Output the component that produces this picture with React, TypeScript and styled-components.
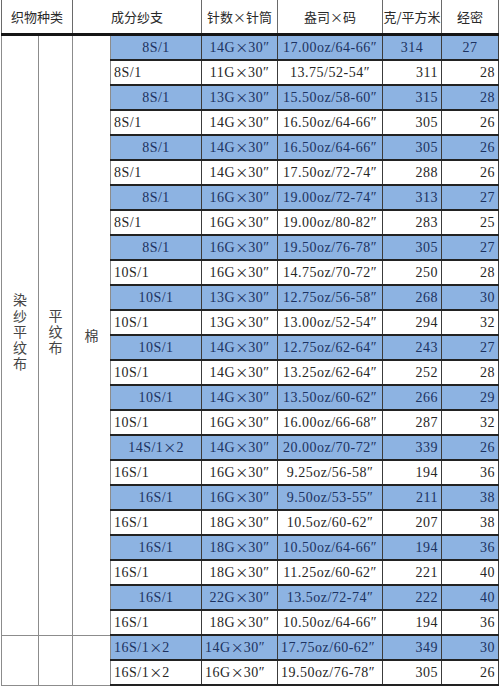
import React from 'react';
import styled, { createGlobalStyle } from 'styled-components';

const Global = createGlobalStyle`
  html, body { margin: 0; padding: 0; background: #ffffff; }
  body { font-family: "Liberation Serif", "Noto Sans CJK SC", serif; }
`;

const Page = styled.div`
  width: 500px;
  height: 686px;
  overflow: hidden;
  padding-left: 1px;
  box-sizing: border-box;
  background: #fff;
`;

const Table = styled.table`
  border-collapse: collapse;
  table-layout: fixed;
  width: 498px;
`;

const Col = styled.col<{ $w: number }>`
  width: ${(p) => p.$w}px;
`;

const HeadCell = styled.th`
  height: 33px;
  padding: 0;
  font-family: "Noto Sans CJK SC", sans-serif;
  font-size: 13px;
  font-weight: 400;
  color: #2a2a2a;
  text-align: center;
  vertical-align: middle;
  white-space: nowrap;
  overflow: visible;
  border-left: 1px solid #6a6a6a;
  border-right: 1px solid #6a6a6a;
  border-bottom: 3px solid #151515;
`;

const SideCell = styled.td`
  padding: 0;
  background: #ffffff;
  text-align: center;
  vertical-align: middle;
  border-left: 1px solid #8c8c8c;
  border-right: 1px solid #8c8c8c;
  border-bottom: 1px solid #8c8c8c;
`;

const VerticalText = styled.span`
  display: inline-block;
  writing-mode: vertical-rl;
  font-family: "Noto Sans CJK SC", sans-serif;
  font-size: 14px;
  line-height: 16px;
  letter-spacing: 2px;
  color: #454545;
`;

const PlainText = styled.span`
  font-family: "Noto Sans CJK SC", sans-serif;
  font-size: 14px;
  color: #454545;
`;

const Times = styled.span`
  font-family: "Noto Sans CJK SC", sans-serif;
  font-size: 13px;
  letter-spacing: 0;
`;

type Align = 'left' | 'center' | 'right';

const DataRow = styled.tr<{ $blue: boolean }>`
  background: ${(p) => (p.$blue ? '#8db3e2' : '#ffffff')};
  color: ${(p) => (p.$blue ? '#1c3260' : '#262626')};
`;

const DataCell = styled.td<{ $align: Align }>`
  height: 23px;
  padding: 0 3px;
  font-size: 14px;
  line-height: 16px;
  letter-spacing: 0.5px;
  white-space: nowrap;
  overflow: hidden;
  text-align: ${(p) => p.$align};
  vertical-align: middle;
  border-left: 1px solid #3c3c3c;
  border-right: 1px solid #3c3c3c;
  border-top: 2px solid #222;
  border-bottom: 2px solid #222;
`;

type Row = {
  cells: string[];
  blue: boolean;
  al: [Align, Align, Align, Align, Align];
};

const X = '×';
const Q = '″';

const raw: string[][] = [
  ['8S/1', `14G${X}30${Q}`, `17.00oz/64-66${Q}`, '314', '27'],
  ['8S/1', `11G${X}30${Q}`, `13.75/52-54${Q}`, '311', '28'],
  ['8S/1', `13G${X}30${Q}`, `15.50oz/58-60${Q}`, '315', '28'],
  ['8S/1', `14G${X}30${Q}`, `16.50oz/64-66${Q}`, '305', '26'],
  ['8S/1', `14G${X}30${Q}`, `16.50oz/64-66${Q}`, '305', '26'],
  ['8S/1', `14G${X}30${Q}`, `17.50oz/72-74${Q}`, '288', '26'],
  ['8S/1', `16G${X}30${Q}`, `19.00oz/72-74${Q}`, '313', '27'],
  ['8S/1', `16G${X}30${Q}`, `19.00oz/80-82${Q}`, '283', '25'],
  ['8S/1', `16G${X}30${Q}`, `19.50oz/76-78${Q}`, '305', '27'],
  ['10S/1', `16G${X}30${Q}`, `14.75oz/70-72${Q}`, '250', '28'],
  ['10S/1', `13G${X}30${Q}`, `12.75oz/56-58${Q}`, '268', '30'],
  ['10S/1', `13G${X}30${Q}`, `13.00oz/52-54${Q}`, '294', '32'],
  ['10S/1', `14G${X}30${Q}`, `12.75oz/62-64${Q}`, '243', '27'],
  ['10S/1', `14G${X}30${Q}`, `13.25oz/62-64${Q}`, '252', '28'],
  ['10S/1', `14G${X}30${Q}`, `13.50oz/60-62${Q}`, '266', '29'],
  ['10S/1', `16G${X}30${Q}`, `16.00oz/66-68${Q}`, '287', '32'],
  [`14S/1${X}2`, `14G${X}30${Q}`, `20.00oz/70-72${Q}`, '339', '26'],
  ['16S/1', `16G${X}30${Q}`, `9.25oz/56-58${Q}`, '194', '36'],
  ['16S/1', `16G${X}30${Q}`, `9.50oz/53-55${Q}`, '211', '38'],
  ['16S/1', `18G${X}30${Q}`, `10.5oz/60-62${Q}`, '207', '38'],
  ['16S/1', `18G${X}30${Q}`, `10.50oz/64-66${Q}`, '194', '36'],
  ['16S/1', `18G${X}30${Q}`, `11.25oz/60-62${Q}`, '221', '40'],
  ['16S/1', `22G${X}30${Q}`, `13.5oz/72-74${Q}`, '222', '40'],
  ['16S/1', `18G${X}30${Q}`, `10.50oz/64-66${Q}`, '194', '36'],
  [`16S/1${X}2`, `14G${X}30${Q}`, `17.75oz/60-62${Q}`, '349', '30'],
  [`16S/1${X}2`, `16G${X}30${Q}`, `19.50oz/76-78${Q}`, '305', '26'],
];

const rows: Row[] = raw.map((cells, i) => {
  const blue = i % 2 === 0;
  let al: Row['al'];
  if (i === 0) al = ['center', 'center', 'center', 'center', 'center'];
  else if (i >= 24) al = ['left', 'left', 'left', 'right', 'right'];
  else if (blue) al = ['center', 'center', 'center', 'right', 'right'];
  else al = ['left', 'center', 'center', 'right', 'right'];
  return { cells, blue, al };
});

const widths = [37, 34, 38, 91, 76, 105, 59, 57];

function renderText(s: string) {
  const parts = s.split(X);
  if (parts.length === 1) return s;
  return (
    <>
      {parts[0]}
      <Times>{X}</Times>
      {parts[1]}
    </>
  );
}

export default function App() {
  return (
    <Page>
      <Global />
      <Table>
        <colgroup>
          {widths.map((w, i) => (
            <Col key={i} $w={w} />
          ))}
        </colgroup>
        <thead>
          <tr>
            <HeadCell colSpan={2}>织物种类</HeadCell>
            <HeadCell colSpan={2}>成分纱支</HeadCell>
            <HeadCell>针数×针筒</HeadCell>
            <HeadCell>盎司×码</HeadCell>
            <HeadCell>克/平方米</HeadCell>
            <HeadCell>经密</HeadCell>
          </tr>
        </thead>
        <tbody>
          {rows.map((r, i) => (
            <DataRow key={i} $blue={r.blue}>
              {i === 0 && (
                <>
                  <SideCell rowSpan={24}>
                    <VerticalText>染纱平纹布</VerticalText>
                  </SideCell>
                  <SideCell rowSpan={24}>
                    <VerticalText>平纹布</VerticalText>
                  </SideCell>
                  <SideCell rowSpan={24}>
                    <PlainText>棉</PlainText>
                  </SideCell>
                </>
              )}
              {i === 24 && (
                <>
                  <SideCell rowSpan={2} />
                  <SideCell rowSpan={2} />
                  <SideCell rowSpan={2} />
                </>
              )}
              {r.cells.map((c, j) => (
                <DataCell key={j} $align={r.al[j]}>
                  {renderText(c)}
                </DataCell>
              ))}
            </DataRow>
          ))}
        </tbody>
      </Table>
    </Page>
  );
}
